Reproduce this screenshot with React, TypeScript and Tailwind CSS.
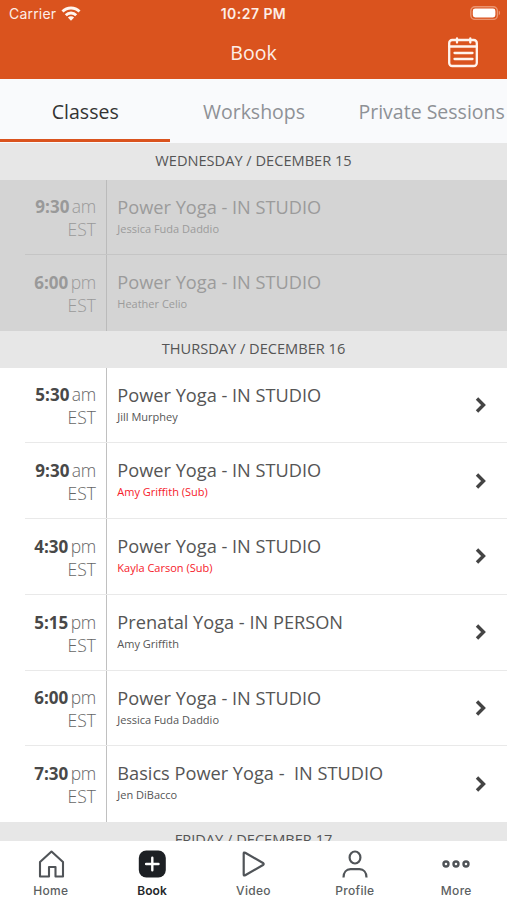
type Session = {
    time: string;
    period: string;
    title: string;
    teacher: string;
    sub?: boolean;
};

const pastSessions: Session[] = [
    { time: "9:30", period: "am", title: "Power Yoga - IN STUDIO", teacher: "Jessica Fuda Daddio" },
    { time: "6:00", period: "pm", title: "Power Yoga - IN STUDIO", teacher: "Heather Celio" },
];

const upcomingSessions: Session[] = [
    { time: "5:30", period: "am", title: "Power Yoga - IN STUDIO", teacher: "Jill Murphey" },
    { time: "9:30", period: "am", title: "Power Yoga - IN STUDIO", teacher: "Amy Griffith (Sub)", sub: true },
    { time: "4:30", period: "pm", title: "Power Yoga - IN STUDIO", teacher: "Kayla Carson (Sub)", sub: true },
    { time: "5:15", period: "pm", title: "Prenatal Yoga - IN PERSON", teacher: "Amy Griffith" },
    { time: "6:00", period: "pm", title: "Power Yoga - IN STUDIO", teacher: "Jessica Fuda Daddio" },
    { time: "7:30", period: "pm", title: "Basics Power Yoga -  IN STUDIO", teacher: "Jen DiBacco" },
];

function StatusBar() {
    return (
        <div className="grid h-[27px] grid-cols-3 items-center pl-[9px] pr-[6px] font-['Inter',sans-serif] text-[14px] text-[#fdeee7]">
            <div className="flex items-center gap-[5px]">
                <span className="tracking-[0.2px]">Carrier</span>
                <svg className="-mt-px" width="20" height="15" viewBox="0 0 20 15" fill="none" stroke="#fff5ef" strokeWidth="2.9">
                    <path d="M1.5 5.6a12 12 0 0 1 17 0" />
                    <path d="M4.8 9.2a7.4 7.4 0 0 1 10.4 0" />
                    <path d="M10 14.7 6.9 11.5a4.4 4.4 0 0 1 6.2 0Z" fill="#fff5ef" stroke="none" />
                </svg>
            </div>
            <span className="-ml-[3px] text-center font-semibold tracking-[0.45px] whitespace-nowrap">10:27 PM</span>
            <svg className="-mt-px justify-self-end" width="31" height="14" viewBox="0 0 31 14">
                <rect x="0.8" y="0.8" width="26.6" height="12.6" rx="4.2" fill="none" stroke="#eb9470" strokeWidth="1.4" />
                <rect x="2.8" y="2.6" width="22.6" height="8.8" rx="2.4" fill="#fff" />
                <path d="M28.8 4.8c1.7.6 1.7 3.8 0 4.4Z" fill="#eb9470" />
            </svg>
        </div>
    );
}

function CalendarIcon() {
    return (
        <svg width="32" height="32" viewBox="0 0 32 32" fill="none" stroke="#fff4ee" strokeWidth="2.3" strokeLinecap="round">
            <rect x="2.2" y="3" width="27.6" height="26" rx="3" />
            <path d="M2.200 9.500h27.600M10 1.500v4M23.300 1.500v4M7.500 16h18M7.500 22h18" />
        </svg>
    );
}

function DayHeader({ children }: { children: string }) {
    return (
        <div className="flex h-[36.5px] shrink-0 items-center justify-center bg-[#e7e7e7] text-[14.6px] text-[#555]">
            {children}
        </div>
    );
}

function SessionRow({ session, past, last }: { session: Session; past?: boolean; last?: boolean }) {
    return (
        <div className={past ? "h-[75.75px] shrink-0 bg-[#d4d4d4] pl-[25px] text-[#9b9b9b]" : "h-[75.75px] shrink-0 bg-white pl-[25px] text-[#555]"}>
            <div className={`flex h-full ${last ? "" : past ? "border-b border-[#c5c5c5]" : "border-b border-[#e9e9e9]"}`}>
                <div className={`w-[82px] shrink-0 border-r pt-[15.8px] pr-[10px] text-right text-[17.5px] leading-[23px] font-light whitespace-nowrap ${past ? "border-[#bbb] text-[#999]" : "border-[#c0c0c0] text-[#666]"}`}>
                    <div>
                        <span className={past ? "text-[17px] font-bold text-[#999]" : "text-[17px] font-bold text-[#484848]"}>{session.time}</span>
                        <span className="ml-[2.5px] tracking-[-0.3px]">{session.period}</span>
                    </div>
                    <div>EST</div>
                </div>
                <div className="grow pt-4 pl-[10.3px]">
                    <div className="text-[18.2px] leading-[23px] whitespace-pre">{session.title}</div>
                    <div className={session.sub ? "text-[11px] leading-[20px] text-[#f6202a]" : "text-[11px] leading-[20px]"}>
                        {session.teacher}
                    </div>
                </div>
                {!past && (
                    <svg className="mr-[20px] self-center" width="12" height="18" viewBox="0 0 12 18" fill="none" stroke="#444" strokeWidth="3.4">
                        <path d="m2 2.500 6.500 6.500L2 15.500" />
                    </svg>
                )}
            </div>
        </div>
    );
}

function BottomNav() {
    return (
        <nav className="grid h-[59.5px] shrink-0 grid-cols-5 bg-white pt-[7px] font-['Inter',sans-serif] text-[12px] font-medium tracking-[0.3px] text-[#5c5f62]">
            <div className="flex flex-col items-center gap-[2.5px]">
                <svg width="32" height="32" viewBox="0 0 32 32" fill="none" stroke="#505458" strokeWidth="2.1" strokeLinejoin="round">
                    <path d="M5 28.500V14L16.500 3.500 28 14v14.500h-7.500v-9.500h-6.500v9.500Z" />
                </svg>
                <span>Home</span>
            </div>
            <div className="flex flex-col items-center gap-[2.5px] text-[#26282b]">
                <svg width="32" height="32" viewBox="0 0 32 32" fill="none" stroke="#fff" strokeWidth="2.4">
                    <rect x="2.800" y="2.500" width="27" height="27" rx="7.500" fill="#1d2024" stroke="none" />
                    <path d="M16.300 9.800v12.400M10.100 16h12.400" strokeLinecap="round" />
                </svg>
                <span className="font-semibold tracking-[0.1px]">Book</span>
            </div>
            <div className="flex flex-col items-center gap-[2.5px]">
                <svg width="32" height="32" viewBox="0 0 32 32" fill="none" stroke="#505458" strokeWidth="2.200" strokeLinejoin="round">
                    <path d="M6.700 5.500v21q0 1.500 1.500.8L26 17q1.400-1 0-2L8.200 4.700q-1.500-.7-1.500.8Z" />
                </svg>
                <span>Video</span>
            </div>
            <div className="flex flex-col items-center gap-[2.5px]">
                <svg width="32" height="32" viewBox="0 0 32 32" fill="none" stroke="#505458" strokeWidth="2.200">
                    <ellipse cx="16" cy="9.500" rx="5.400" ry="6" />
                    <path d="M4.500 29.500c0-5.300 3-8.300 7-8.300h9c4 0 7 3 7 8.300" />
                </svg>
                <span>Profile</span>
            </div>
            <div className="flex flex-col items-center gap-[2.5px]">
                <svg width="32" height="32" viewBox="0 0 32 32" fill="none" stroke="#505458" strokeWidth="2.400">
                    <circle cx="6" cy="16" r="2.500" />
                    <circle cx="16" cy="16" r="2.500" />
                    <circle cx="26" cy="16" r="2.500" />
                </svg>
                <span>More</span>
            </div>
        </nav>
    );
}

export default function App() {
    return (
        <div className="flex h-[900px] w-[507px] flex-col overflow-hidden bg-white font-['Open_Sans',sans-serif]">
            <header className="h-[79px] shrink-0 bg-[#da531e]">
                <StatusBar />
                <div className="grid h-[51px] grid-cols-3 items-center pr-7">
                    <span />
                    <h1 className="pl-[28px] text-center text-[19.500px] text-[#fdeee7]">Book</h1>
                    <div className="justify-self-end">
                        <CalendarIcon />
                    </div>
                </div>
            </header>

            {/* Tabs, the last one runs past the right edge */}
            <div className="flex h-16 shrink-0 overflow-hidden bg-[#f9fafc] pb-px text-[19.500px] text-[#8e9196]">
                <div className="flex w-[169.500px] shrink-0 items-center justify-center border-b-[3px] border-[#da531e] pt-[5px] pl-px text-[#333]">Classes</div>
                <div className="flex w-[169px] shrink-0 items-center justify-center pt-[3px]">Workshops</div>
                <div className="flex shrink-0 items-center px-5 pt-[3px] whitespace-nowrap">Private Sessions</div>
            </div>

            <main className="flex min-h-0 flex-1 flex-col overflow-hidden">
                <DayHeader>WEDNESDAY / DECEMBER 15</DayHeader>
                {pastSessions.map((session, i) => (
                    <SessionRow key={i} session={session} past last={i === pastSessions.length - 1} />
                ))}
                <DayHeader>THURSDAY / DECEMBER 16</DayHeader>
                {upcomingSessions.map((session, i) => (
                    <SessionRow key={i} session={session} last={i === upcomingSessions.length - 1} />
                ))}
                <DayHeader>FRIDAY / DECEMBER 17</DayHeader>
            </main>

            <BottomNav />
        </div>
    );
}
